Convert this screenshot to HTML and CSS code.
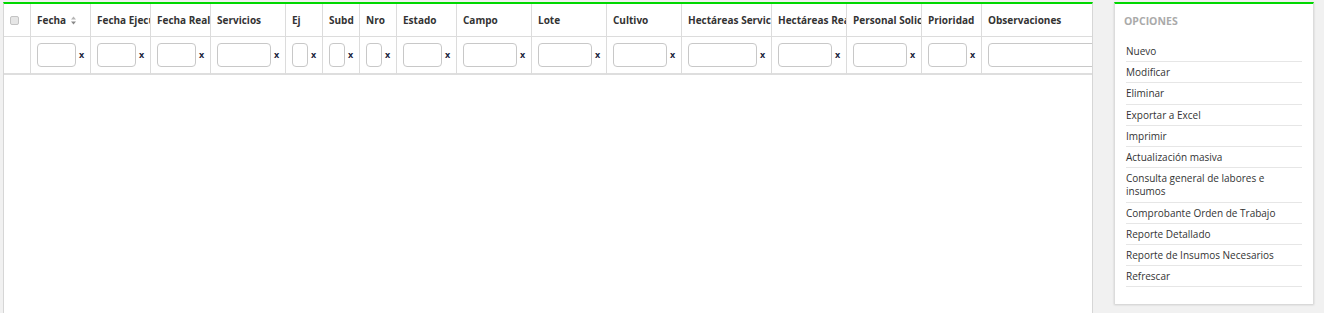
FILE: index.html
```html
<!DOCTYPE html>
<html lang="es">
  <head>
    <meta charset="UTF-8" />
    <meta name="viewport" content="width=device-width, initial-scale=1.0" />
    <title>Órdenes de Trabajo</title>
    <link rel="stylesheet" href="styles.css">
  </head>
  <body>
    <div class="page">
      <div class="grid-panel">
        <div class="grid">
          <div class="row head">
            <div class="cell w27 chk"><input type="checkbox" class="check" /></div>
            <div class="cell w60">Fecha
              <svg class="sort" width="5" height="9" viewBox="0 0 5 9"><path d="M0 3.5 L2.5 0.5 L5 3.5Z" fill="#b5b5b5"/><path d="M0 5.5 L2.5 8.5 L5 5.5Z" fill="#888"/></svg>
            </div>
            <div class="cell w60">Fecha Ejecución</div>
            <div class="cell w60">Fecha Realización</div>
            <div class="cell w75">Servicios</div>
            <div class="cell w37">Ej</div>
            <div class="cell w37">Subd</div>
            <div class="cell w37">Nro</div>
            <div class="cell w60">Estado</div>
            <div class="cell w75">Campo</div>
            <div class="cell w75">Lote</div>
            <div class="cell w75">Cultivo</div>
            <div class="cell w90">Hectáreas Servicio</div>
            <div class="cell w75">Hectáreas Reales</div>
            <div class="cell w75">Personal Solicitante</div>
            <div class="cell w60">Prioridad</div>
            <div class="cell w150">Observaciones</div>
          </div>
          <div class="row filters">
            <div class="cell w27"></div>
            <div class="cell w60"><input class="filter" type="text" /><span class="clear">x</span></div>
            <div class="cell w60"><input class="filter" type="text" /><span class="clear">x</span></div>
            <div class="cell w60"><input class="filter" type="text" /><span class="clear">x</span></div>
            <div class="cell w75"><input class="filter" type="text" /><span class="clear">x</span></div>
            <div class="cell w37"><input class="filter" type="text" /><span class="clear">x</span></div>
            <div class="cell w37"><input class="filter" type="text" /><span class="clear">x</span></div>
            <div class="cell w37"><input class="filter" type="text" /><span class="clear">x</span></div>
            <div class="cell w60"><input class="filter" type="text" /><span class="clear">x</span></div>
            <div class="cell w75"><input class="filter" type="text" /><span class="clear">x</span></div>
            <div class="cell w75"><input class="filter" type="text" /><span class="clear">x</span></div>
            <div class="cell w75"><input class="filter" type="text" /><span class="clear">x</span></div>
            <div class="cell w90"><input class="filter" type="text" /><span class="clear">x</span></div>
            <div class="cell w75"><input class="filter" type="text" /><span class="clear">x</span></div>
            <div class="cell w75"><input class="filter" type="text" /><span class="clear">x</span></div>
            <div class="cell w60"><input class="filter" type="text" /><span class="clear">x</span></div>
            <div class="cell w150"><input class="filter" type="text" /><span class="clear">x</span></div>
          </div>
        </div>
      </div>

      <div class="options">
        <h3>OPCIONES</h3>
        <ul>
          <li><a href="#">Nuevo</a></li>
          <li><a href="#">Modificar</a></li>
          <li><a href="#">Eliminar</a></li>
          <li><a href="#">Exportar a Excel</a></li>
          <li><a href="#">Imprimir</a></li>
          <li><a href="#">Actualización masiva</a></li>
          <li><a href="#">Consulta general de labores e insumos</a></li>
          <li><a href="#">Comprobante Orden de Trabajo</a></li>
          <li><a href="#">Reporte Detallado</a></li>
          <li><a href="#">Reporte de Insumos Necesarios</a></li>
          <li><a href="#">Refrescar</a></li>
        </ul>
      </div>
    </div>
  </body>
</html>
```

FILE: styles.css
```css
html, body {
  margin: 0;
  height: 100%;
}

body {
  background-color: #f1f1f1;
  font-family: "Open Sans", "Liberation Sans", sans-serif;
  font-size: 10px;
  color: #333;
}

.page {
  display: flex;
  align-items: flex-start;
  gap: 21px;
  padding: 2px 10px 0 3px;
  height: 100%;
  box-sizing: border-box;
}

.grid-panel {
  flex: 1;
  min-width: 0;
  height: 100%;
  overflow: hidden;
  background: #fff;
  border-top: 2px solid #00d800;
  border-left: 1px solid #d6d6d6;
  border-right: 1px solid #d6d6d6;
  box-sizing: border-box;
}

.grid {
  width: max-content;
}

.row {
  display: flex;
}

.cell {
  box-sizing: border-box;
  border-right: 1px solid #dcdcdc;
  padding-left: 6px;
  overflow: hidden;
  white-space: nowrap;
  flex-shrink: 0;
}

.w27 { width: 27px; }
.w37 { width: 37px; }
.w60 { width: 60px; }
.w75 { width: 75px; }
.w90 { width: 90px; }
.w150 { width: 150px; }

.head .cell {
  height: 33px;
  line-height: 32px;
  font-weight: bold;
  border-bottom: 1px solid #dcdcdc;
}

.head .chk {
  padding-left: 6px;
  display: flex;
  align-items: center;
}

.check {
  appearance: none;
  margin: 0;
  width: 9px;
  height: 9px;
  border: 1px solid #c4c4c4;
  border-radius: 2px;
  background: #e6e6e6;
}

.sort {
  vertical-align: -1px;
  margin-left: 2px;
}

.filters .cell {
  height: 38px;
  border-bottom: 2px solid #dedede;
  display: flex;
  align-items: flex-start;
  padding-top: 6px;
}

.filter {
  box-sizing: border-box;
  width: calc(100% - 14px);
  height: 24px;
  margin: 0;
  padding: 2px 4px;
  border: 1px solid #c8c8c8;
  border-radius: 4px;
  background: #fff;
  font-family: inherit;
  font-size: 10px;
}

.clear {
  margin-left: 3px;
  line-height: 24px;
  font-size: 9px;
  font-weight: bold;
  color: #1d2640;
}

.options {
  width: 200px;
  box-sizing: border-box;
  background: #fff;
  border-top: 2px solid #00d800;
  border-left: 1px solid #dcdcdc;
  border-right: 1px solid #dcdcdc;
  box-shadow: 0 1px 2px rgba(0, 0, 0, 0.15);
  padding: 0 11px 17px 11px;
}

.options h3 {
  margin: 0 0 0 -2px;
  padding-top: 10px;
  height: 37px;
  box-sizing: border-box;
  font-size: 10.5px;
  font-weight: bold;
  color: #aaa;
  line-height: 14px;
}

.options ul {
  list-style: none;
  margin: 0;
  padding: 0;
}

.options li {
  border-bottom: 1px solid #e6e6e6;
  padding: 4px 0 3px;
  line-height: 13.2px;
}

.options a {
  color: #333;
  text-decoration: none;
}
```
